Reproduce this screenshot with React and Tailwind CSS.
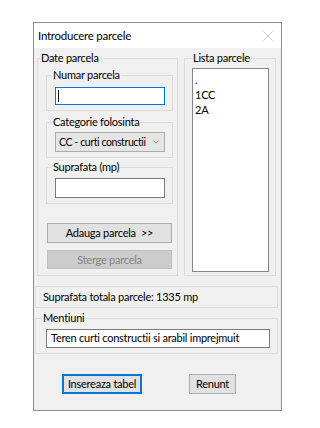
import { ChevronDown } from "lucide-react";

function Group({ label, className, legendClass, children }) {
  return (
    <fieldset className={`border border-[#dcdcdc] p-0 m-0 min-w-0 ${className}`}>
      <legend className={`px-[1px] leading-[14px] ${legendClass}`}>{label}</legend>
      {children}
    </fieldset>
  );
}

export default function App() {
  return (
    <div
      className="min-h-screen bg-white pl-[33px] pt-[22px] text-[11px] tracking-[-0.25px] text-black"
      style={{ fontFamily: 'Lato, "Noto Sans", sans-serif' }}
    >
      <div className="w-[249px] h-[389px] border border-[#8d8d8d] bg-[#f0f0f0] flex flex-col">
        {/* title bar */}
        <div className="h-[25px] bg-white flex items-center justify-between pl-[4px] pr-[8px]">
          <span className="leading-[14px] text-[11.5px]">Introducere parcele</span>
          <svg width="10" height="10" viewBox="0 0 10 10" className="mt-[1px]">
            <path d="M0.5 0.5 L9.5 9.5 M9.5 0.5 L0.5 9.5" stroke="#c4c4c4" strokeWidth="1" />
          </svg>
        </div>

        <div className="flex flex-col">
          <div className="flex mt-[3px] pl-[3px]">
            <Group label="Date parcela" className="w-[141px] h-[225px]" legendClass="ml-[2px]">
              <div className="pl-[8px] pr-[4px] pt-[3px] flex flex-col">
                <Group label="Numar parcela" className="h-[43px]" legendClass="ml-[5px]">
                  <div className="pl-[8px] pt-[5px]">
                    <div className="w-[110px] h-[18px] bg-white border border-[#0078d7] flex items-center pl-[2px]">
                      <span className="w-[1px] h-[12px] bg-black" />
                    </div>
                  </div>
                </Group>
                <Group label="Categorie folosinta" className="h-[43px] mt-[4px]" legendClass="ml-[5px]">
                  <div className="pl-[8px] pt-[3px]">
                    <div className="w-[110px] h-[20px] bg-[#e5e5e5] border border-[#acacac] flex items-center pl-[3px] pr-[3px]">
                      <span className="flex-1 leading-[14px] whitespace-nowrap text-[10.5px] tracking-[-0.4px]">CC - curti constructii</span>
                      <ChevronDown size={10} strokeWidth={1.5} color="#555" className="shrink-0" />
                    </div>
                  </div>
                </Group>
                <Group label="Suprafata (mp)" className="h-[44px] mt-[2px]" legendClass="ml-[5px]">
                  <div className="pl-[8px] pt-[4px]">
                    <div className="w-[110px] h-[20px] bg-white border border-[#7a7a7a]" />
                  </div>
                </Group>
                <button className="mt-[19px] ml-[1px] w-[125px] h-[20px] bg-[#e1e1e1] border border-[#adadad] leading-[14px] whitespace-nowrap">
                  Adauga parcela&nbsp;&nbsp;&gt;&gt;
                </button>
                <button
                  disabled
                  className="mt-[7px] ml-[1px] w-[125px] h-[19px] bg-[#cccccc] border border-[#bfbfbf] text-[#838383] leading-[14px] whitespace-nowrap"
                >
                  Sterge parcela
                </button>
              </div>
            </Group>

            <Group label="Lista parcele" className="w-[92px] h-[225px] ml-[6px]" legendClass="ml-[7px]">
              <div className="pl-[7px] pt-[3px]">
                <div className="w-[77px] h-[204px] bg-white border border-[#828790] pl-[2px] pt-[3px] leading-[15px]">
                  <div>.</div>
                  <div>1CC</div>
                  <div>2A</div>
                </div>
              </div>
            </Group>
          </div>

          <div className="mt-[10px] ml-[1px] w-[243px] h-[22px] border border-[#dcdcdc] flex items-center pl-[7px]">
            Suprafata totala parcele: 1335 mp
          </div>

          <Group label="Mentiuni" className="mt-[3px] ml-[1px] w-[243px] h-[43px]" legendClass="ml-[6px]">
            <div className="pl-[10px] pt-[4px]">
              <div className="w-[224px] h-[19px] bg-white border border-[#7a7a7a] flex items-center pl-[4px] whitespace-nowrap">
                Teren curti constructii si arabil imprejmuit
              </div>
            </div>
          </Group>

          <div className="flex mt-[20px]">
            <button className="ml-[28px] w-[80px] h-[20px] bg-[#e1e1e1] border border-[#0078d7] shadow-[inset_0_0_0_1px_#0078d7] leading-[14px] whitespace-nowrap">
              Insereaza tabel
            </button>
            <button className="ml-[47px] w-[47px] h-[20px] bg-[#e1e1e1] border border-[#adadad] leading-[14px] whitespace-nowrap">
              Renunt
            </button>
          </div>
        </div>
      </div>
    </div>
  );
}
